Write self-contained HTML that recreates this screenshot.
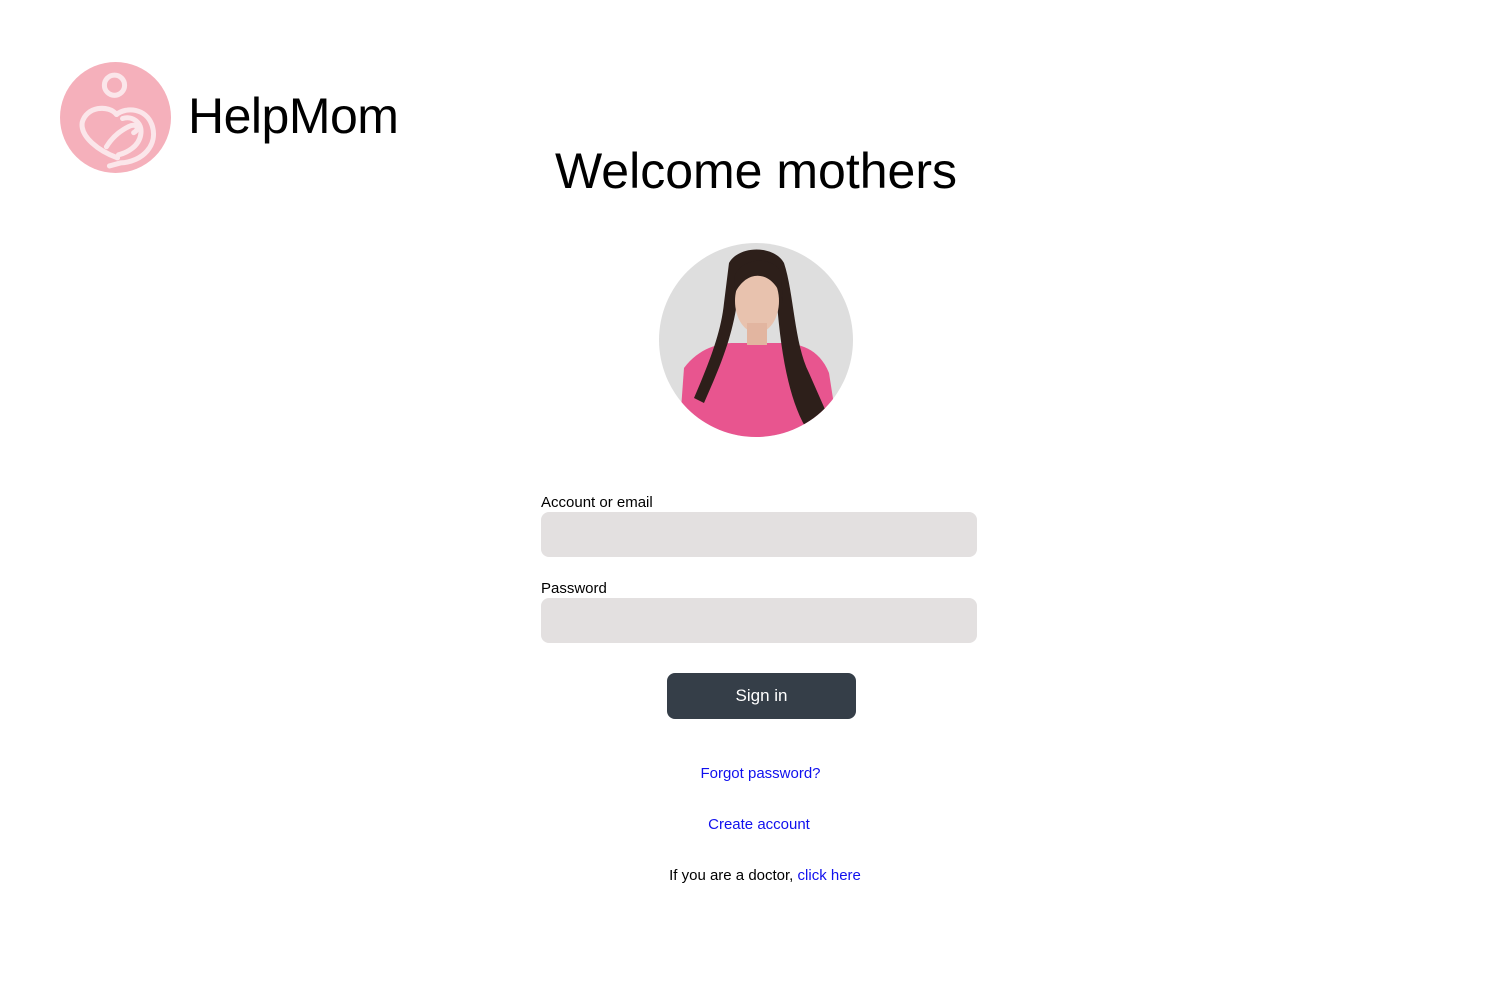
<!DOCTYPE html>
<html><head><style>
body{margin:0;width:1512px;height:982px;background:#fff;font-family:"Liberation Sans",sans-serif;position:relative;overflow:hidden}
.abs{position:absolute}
.lbl{font-size:15px;color:#000}
.inp{background:#e3e0e0;border-radius:8px;width:436px;height:45px;left:541px}
a{color:#1010ee;text-decoration:none}
</style></head><body>
<svg class="abs" style="left:60px;top:62px" width="111" height="111" viewBox="0 0 110 110">
<circle cx="55" cy="55" r="55" fill="#f5b0bb"/>
<g fill="none" stroke="#fbe6ea" stroke-width="5" stroke-linecap="round">
<circle cx="54" cy="23" r="10"/>
<path d="M56 52 C48 42 26 44 22 60 C20 74 38 88 57 95"/>
<path d="M56 52 C66 44 85 46 91 62 C98 82 82 99 60 100 L49 103"/>
<path d="M46 84 C52 74 60 68 68 64 C76 60 80 66 73 70"/>
<path d="M62 56 C72 53 82 60 80 72 C78 84 66 90 58 92"/>
</g></svg>
<div class="abs" style="left:188px;top:87px;font-size:50px;color:#000;letter-spacing:-0.5px">HelpMom</div>
<div class="abs" style="left:0;width:1512px;text-align:center;top:142px;font-size:50px;color:#000">Welcome mothers</div>
<svg class="abs" style="left:659px;top:243px" width="194" height="194" viewBox="0 0 194 194">
<defs><clipPath id="c"><circle cx="97" cy="97" r="97"/></clipPath></defs>
<g clip-path="url(#c)">
<rect width="194" height="194" fill="#dedede"/>
<path d="M25 125 C40 105 60 100 75 100 L120 100 C140 100 160 105 170 130 L180 194 L20 194 Z" fill="#e8558f"/>
<path d="M70 20 C80 2 115 2 125 20 C135 50 135 100 150 130 L172 180 L150 190 C130 160 122 110 118 60 L78 60 C72 100 58 130 45 160 L35 155 C50 120 62 90 65 60 Z" fill="#2d1f1a"/>
<ellipse cx="98" cy="58" rx="22" ry="32" fill="#e8c2ae"/>
<rect x="88" y="80" width="20" height="22" fill="#e2b5a0"/>
<path d="M75 35 C80 14 115 12 122 30 L124 60 C118 30 90 22 76 50 Z" fill="#2d1f1a"/>
</g></svg>
<div class="abs lbl" style="left:541px;top:494px">Account or email</div>
<div class="abs inp" style="top:512px"></div>
<div class="abs lbl" style="left:541px;top:580px">Password</div>
<div class="abs inp" style="top:598px"></div>
<div class="abs" style="left:667px;top:673px;width:189px;height:46px;background:#353e48;border-radius:8px;color:#fff;font-size:17px;text-align:center;line-height:46px">Sign in</div>
<div class="abs" style="left:0;width:1521px;text-align:center;top:765px;font-size:15px"><a>Forgot password?</a></div>
<div class="abs" style="left:0;width:1518px;text-align:center;top:816px;font-size:15px"><a>Create account</a></div>
<div class="abs" style="left:0;width:1530px;text-align:center;top:867px;font-size:15px;color:#000">If you are a doctor, <a>click here</a></div>
</body></html>
